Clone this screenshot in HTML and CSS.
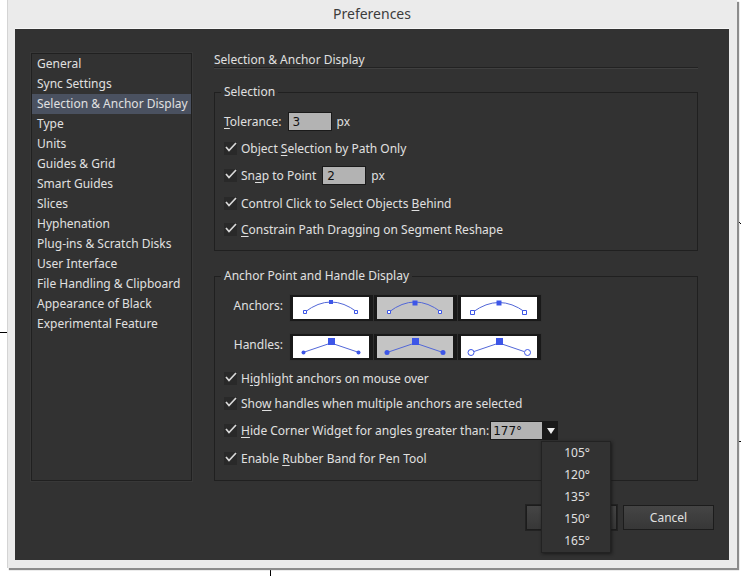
FILE: index.html
```html
<!DOCTYPE html>
<html lang="en">
<head>
<meta charset="utf-8">
<title>Preferences</title>
<link rel="stylesheet" href="styles.css">
</head>
<body>
<svg class="mark mark-left" width="8" height="1" aria-hidden="true"><path d="M0 .5H8" stroke="#000"/></svg>
<svg class="mark mark-bottom" width="1" height="8" aria-hidden="true"><path d="M.5 0V8" stroke="#000"/></svg>
<svg class="mark mark-right" width="5" height="6" aria-hidden="true"><path d="M0 1L5 6" stroke="#000" fill="none"/></svg>
<svg class="mark mark-right-low" width="5" height="3" aria-hidden="true"><path d="M0 2L2 1.500H5" stroke="#000" fill="none"/></svg>
<main class="window">
  <h1 class="titlebar">Preferences</h1>
  <form class="dialog">
    <nav class="categories">
      <a href="#">General</a>
      <a href="#">Sync Settings</a>
      <a href="#" class="selected" aria-current="page">Selection &amp; Anchor Display</a>
      <a href="#">Type</a>
      <a href="#">Units</a>
      <a href="#">Guides &amp; Grid</a>
      <a href="#">Smart Guides</a>
      <a href="#">Slices</a>
      <a href="#">Hyphenation</a>
      <a href="#">Plug-ins &amp; Scratch Disks</a>
      <a href="#">User Interface</a>
      <a href="#">File Handling &amp; Clipboard</a>
      <a href="#">Appearance of Black</a>
      <a href="#">Experimental Feature</a>
    </nav>
    <section class="panel">
      <h2>Selection &amp; Anchor Display</h2>
      <fieldset class="selection">
        <legend>Selection</legend>
        <div class="row field-row">
          <label for="tolerance"><u>T</u>olerance:</label>
          <input class="number" id="tolerance" type="text" value="3">
          <span class="unit">px</span>
        </div>
        <div class="row tight">
          <input class="check" id="path-only" type="checkbox" checked>
          <label for="path-only">Object <u>S</u>election by Path Only</label>
        </div>
        <div class="row field-row">
          <input class="check" id="snap" type="checkbox" checked>
          <label for="snap" id="snap-name">Sn<u>a</u>p to Point</label>
          <input class="number" type="text" value="2" aria-labelledby="snap-name">
          <span class="unit">px</span>
        </div>
        <div class="row">
          <input class="check" id="behind" type="checkbox" checked>
          <label for="behind">Control Click to Select Objects <u>B</u>ehind</label>
        </div>
        <div class="row tight">
          <input class="check" id="constrain" type="checkbox" checked>
          <label for="constrain"><u>C</u>onstrain Path Dragging on Segment Reshape</label>
        </div>
      </fieldset>
      <fieldset class="display">
        <legend>Anchor Point and Handle Display</legend>
        <div class="style-row" role="radiogroup" aria-labelledby="anchors-name">
          <span class="style-name" id="anchors-name">Anchors:</span>
          <div class="swatches">
            <label class="swatch"><input type="radio" name="anchors" aria-label="Small">
              <svg width="76" height="22" viewBox="0 0 76 22"><path d="M12 15Q38-5 64 15" class="wire"/><path d="M36 3h4v4h-4z" class="solid"/><path d="M10.500 13.500h3v3h-3zM61.500 13.500h3v3h-3z" class="open"/></svg></label>
            <label class="swatch"><input type="radio" name="anchors" aria-label="Medium" checked>
              <svg width="76" height="22" viewBox="0 0 76 22"><path d="M12 15Q38-5 64 15" class="wire"/><path d="M35.500 3.500h5v5h-5z" class="solid"/><path d="M10.500 13.500h3v3h-3zM61.500 13.500h3v3h-3z" class="open"/></svg></label>
            <label class="swatch"><input type="radio" name="anchors" aria-label="Large">
              <svg width="76" height="22" viewBox="0 0 76 22"><path d="M12 15Q38-4 64 15" class="wire"/><path d="M35.500 3.500h5v5h-5z" class="solid"/><path d="M9.500 13.500h4v4h-4zM61.500 13.500h4v4h-4z" class="open"/></svg></label>
          </div>
        </div>
        <div class="style-row" role="radiogroup" aria-labelledby="handles-name">
          <span class="style-name" id="handles-name">Handles:</span>
          <div class="swatches">
            <label class="swatch"><input type="radio" name="handles" aria-label="Small">
              <svg width="76" height="22" viewBox="0 0 76 22"><path d="M10 16.500L38 7L66 16.500" class="wire"/><path d="M35 2h7v7h-7z" class="solid"/><circle cx="10.500" cy="16.500" r="2" class="solid"/><circle cx="65.500" cy="16.500" r="2" class="solid"/></svg></label>
            <label class="swatch"><input type="radio" name="handles" aria-label="Medium" checked>
              <svg width="76" height="22" viewBox="0 0 76 22"><path d="M10 16.500L38 7L66 16.500" class="wire"/><path d="M35 2h7v7h-7z" class="solid"/><circle cx="10" cy="16.500" r="2.500" class="solid"/><circle cx="66" cy="16.500" r="2.500" class="solid"/></svg></label>
            <label class="swatch"><input type="radio" name="handles" aria-label="Large">
              <svg width="76" height="22" viewBox="0 0 76 22"><path d="M13 15.500L38 7L63 15.500" class="wire"/><path d="M35 2h7v7h-7z" class="solid"/><circle cx="10" cy="16.500" r="3" class="open"/><circle cx="66.500" cy="16.500" r="3" class="open"/></svg></label>
          </div>
        </div>
        <div class="row tight">
          <input class="check" id="highlight" type="checkbox" checked>
          <label for="highlight">H<u>i</u>ghlight anchors on mouse over</label>
        </div>
        <div class="row tight">
          <input class="check" id="show" type="checkbox" checked>
          <label for="show">Sho<u>w</u> handles when multiple anchors are selected</label>
        </div>
        <div class="row field-row">
          <input class="check" id="hide" type="checkbox" checked>
          <label for="hide" id="hide-name"><u>H</u>ide Corner Widget for angles greater than:</label>
          <div class="combo">
            <input class="angle" type="text" value="177°" role="combobox" aria-expanded="true" aria-controls="angles" aria-labelledby="hide-name">
            <button class="arrow" type="button" aria-label="Show angles"><svg width="8" height="6" viewBox="0 0 8 6"><path d="M0 0H8L4 6z" fill="#eee"/></svg></button>
            <ul class="menu" id="angles" role="listbox">
              <li role="option">105°</li>
              <li role="option">120°</li>
              <li role="option">135°</li>
              <li role="option">150°</li>
              <li role="option">165°</li>
            </ul>
          </div>
        </div>
        <div class="row">
          <input class="check" id="rubber" type="checkbox" checked>
          <label for="rubber">Enable <u>R</u>ubber Band for Pen Tool</label>
        </div>
      </fieldset>
    </section>
    <footer class="actions">
      <button class="action default" type="submit" aria-label="OK"></button>
      <button class="action" type="button">Cancel</button>
    </footer>
  </form>
</main>
</body>
</html>
```
FILE: styles.css
```css
* {
  box-sizing: border-box;
}

body {
  position: relative;
  margin: 0;
  padding: 0 4px 8px 7px;
  background: #fff;
  color: #e0e0e0;
  font: 12px/20px "Noto Sans", sans-serif;
}

input,
button {
  margin: 0;
  font: inherit;
}

u {
  text-underline-offset: 2px;
}

.mark {
  position: absolute;
  display: block;
}

.mark-left { left: 0; top: 332px; }
.mark-bottom { left: 270px; bottom: 0; }
.mark-right { right: 0; top: 218px; }
.mark-right-low { right: 0; top: 440px; }

.window {
  position: relative;
  padding: 0 8px 8px 7px;
  border-left: 1px solid #d4d4d4;
  background: #ebebeb;
  box-shadow: 2px 2px 1px #8c8c8c;
}

.titlebar {
  margin: 0;
  height: 29px;
  color: #3c3c3c;
  font-size: 14px;
  font-weight: 400;
  line-height: 28px;
  text-align: center;
  border-bottom: 1px solid #f6f6f6;
}

.dialog {
  display: grid;
  grid-template-columns: 161px 1fr;
  column-gap: 22px;
  padding: 22px 31px 30px 16px;
  background: #323232;
}

.categories {
  display: flex;
  flex-direction: column;
  margin-top: 2px;
  border: 1px solid #202020;
  box-shadow: 0 0 0 1px #383838;
}

.categories a {
  padding-left: 5px;
  color: #e0e0e0;
  text-decoration: none;
  white-space: nowrap;
}

.categories .selected {
  background: #4a5160;
}

.panel {
  display: flex;
  flex-direction: column;
}

h2 {
  margin: 0 0 15px;
  height: 17px;
  border-bottom: 1px solid #222;
  box-shadow: 0 1px #404040;
  font-size: 12px;
  font-weight: 400;
  line-height: 18px;
}

fieldset {
  min-width: 0;
  margin: 0;
  padding: 6px 9px 8px;
  border: 1px solid #202020;
}

legend {
  height: 18px;
  margin-left: -3px;
  padding: 0 3px;
  line-height: 18px;
}

.display {
  margin-top: 16px;
  padding-top: 3px;
}

.row {
  display: flex;
  align-items: center;
  height: 27px;
}

.tight {
  height: 25px;
}

.field-row {
  height: 29px;
}

.check {
  appearance: none;
  flex: none;
  width: 13px;
  height: 13px;
  margin-right: 4px;
  background: #292929 url("data:image/svg+xml,%3Csvg xmlns='http://www.w3.org/2000/svg' viewBox='0 0 13 13'%3E%3Cpath d='M2 5L5 8.500L12 1' fill='none' stroke='%23d8d8d8' stroke-width='1.700'/%3E%3C/svg%3E");
}

.number,
.angle {
  height: 19px;
  padding: 0 4px;
  border: 1px solid #1a1a1a;
  border-radius: 0;
  background: #b3b3b3;
  color: #111;
  font-family: "DejaVu Sans", sans-serif;
}

.number {
  width: 44px;
  margin: 0 5px 0 6px;
}

.style-row {
  display: flex;
  align-items: center;
  height: 39px;
}

.style-name {
  width: 59px;
  margin-right: 6px;
  padding-bottom: 4px;
  text-align: right;
}

.swatches {
  display: flex;
  background: #191919;
}

.swatch {
  display: flex;
  padding: 2px 4px 2px 3px;
  border: 1px solid #303030;
  border-right-width: 0;
}

.swatch:last-child {
  border-right-width: 1px;
}

.swatch input {
  position: absolute;
  opacity: 0;
}

.swatch svg {
  display: block;
  background: #fff;
}

.swatch input:checked + svg {
  background: #c4c4c4;
}

.wire {
  fill: none;
  stroke: #5267d8;
}

.solid {
  fill: #3d56e8;
}

.open {
  fill: #fff;
  stroke: #3d56e8;
}

.combo {
  position: relative;
  display: flex;
  margin-left: 1px;
}

.angle {
  width: 53px;
  padding: 0 2px;
}

.arrow {
  display: grid;
  place-items: center;
  width: 15px;
  padding: 0;
  border: 0;
  background: #191919;
}

.menu {
  position: absolute;
  z-index: 1;
  top: 20px;
  left: 51px;
  width: 70px;
  margin: 0;
  padding: 0 0 0 22px;
  border: 1px solid #222;
  background: #323232;
  box-shadow: 1px 1px 3px #1a1a1a;
  list-style: none;
}

.menu li {
  line-height: 22px;
}

.actions {
  grid-column: 2;
  display: flex;
  justify-content: flex-end;
  gap: 6px;
  margin-top: 24px;
  margin-right: -16px;
}

.action {
  width: 91px;
  height: 25px;
  padding: 0;
  border: 1px solid #1c1c1c;
  background: linear-gradient(#454545, #373737);
  color: #e0e0e0;
}

.default {
  box-shadow: 0 0 0 1px #222;
}
```
